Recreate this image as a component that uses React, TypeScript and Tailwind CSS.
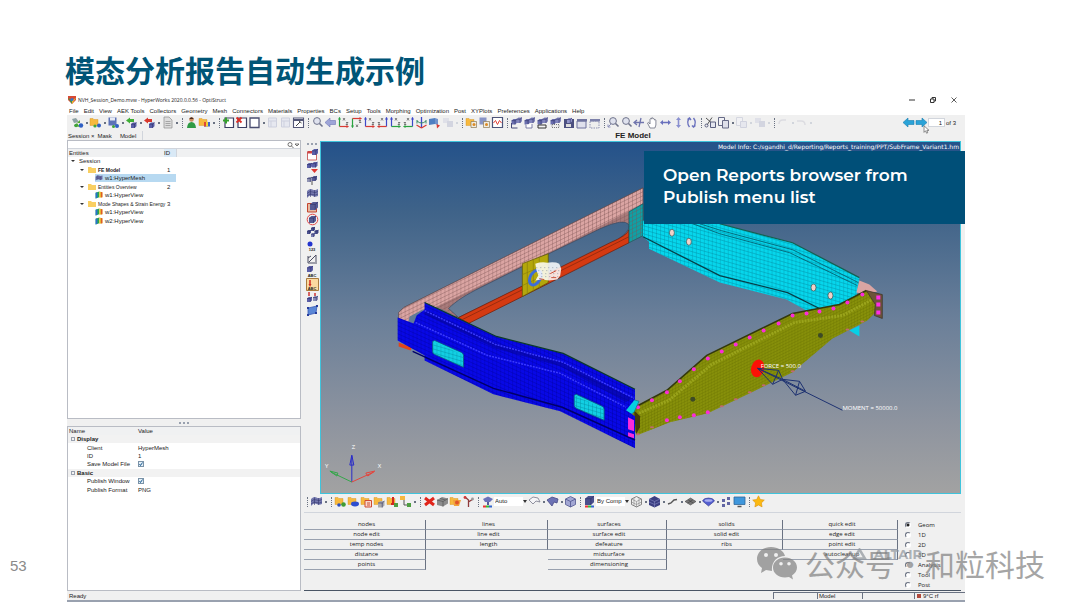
import { ReactNode, useState } from "react";

/* ---------- toolbar glyphs, all drawn on a 13x13 box ---------- */

const cube = (x: number, y: number, s: number, fill = "#5b5fa8") => (
  <g>
    <path d={ `M${x} ${y + s * 0.3}L${x + s * 0.35} ${y}H${x + s}V${y + s * 0.7}L${x + s * 0.65} ${y + s}H${x}Z` } fill={ fill } />
    <path d={ `M${x} ${y + s * 0.3}H${x + s * 0.65}L${x + s} ${y}M${x + s * 0.65} ${y + s * 0.3}V${y + s}` } stroke="#2c2f66" strokeWidth=".6" fill="none" />
  </g>
);

const folder = <path d="M1 2.500h3l1 1h4v6H1z" fill="#f7b93e" stroke="#d18f1c" strokeWidth=".4" />;
const mesh = (
  <>
    <path d="M1 4q3-3 5.500-1.500T12 2v7q-3 1.500-5.500 0T1 11z" fill="#7478ae" />
    <path d="M1 6.500q3-3 5.500-1.500T12 4.500M1 9q3-3 5.500-1.500T12 7M4.500 2.500v7.500M8.500 3v7" stroke="#34386f" strokeWidth=".6" fill="none" />
  </>
);
const magnifier = (
  <>
    <circle cx="6" cy="5" r="3.400" fill="#dfe2ee" stroke="#70748c" />
    <path d="M8.500 7.500l3 3" stroke="#70748c" strokeWidth="1.600" />
  </>
);
const stackedCubes = (
  <>
    { cube(1.5, 3, 5.5, "#6a6eae") }
    { cube(6.5, 1.5, 5.5, "#8285bd") }
  </>
);

function axes(v: string, h: string, flip = false) {
  return (
    <g transform={ flip ? "translate(13 0) scale(-1 1)" : undefined }>
      <path d="M2.500 1.500v9" stroke={ v } strokeWidth="1.200" />
      <path d="M1 3.500l1.500-2.500L4 3.500z" fill={ v } />
      <path d="M2.500 10.500h8" stroke={ h } strokeWidth="1.200" />
      <path d="M9.500 9l2.500 1.500L9.500 12z" fill={ h } />
      <path d="M6 2l2 2.500M8 2L6 4.500M9 6.500h2l-2 2h2" stroke="#333" strokeWidth=".6" fill="none" />
    </g>
  );
}

const glyphs: Record<string, ReactNode> = {
  newSession: <><path d="M1 3l4-1 3 4-5 1z" fill="#8ea3a5" /><path d="M6 7h3V4M3 10l3-3 3 4z" fill="#56a92f" /><circle cx="10" cy="9.500" r="2.200" fill="#2f5fc4" /><circle cx="5" cy="9.500" r="1.800" fill="#3fa33a" /></>,
  openSession: <>{ folder }<circle cx="10" cy="9.500" r="2" fill="#2f5fc4" /><circle cx="6" cy="10" r="1.600" fill="#3fa33a" /></>,
  save: <><path d="M1.500 1.500h8v8h-8z" fill="#5b72b8" /><path d="M3 1.500h5v3H3z" fill="#e6eaf5" /><circle cx="10" cy="10" r="2" fill="#2f5fc4" /><circle cx="6.500" cy="10.500" r="1.500" fill="#3fa33a" /></>,
  importModel: <><path d="M1 4.500L5 1.500V3h4v3H5v1.500z" fill="#3fae35" />{ cube(6, 6.5, 5.5) }</>,
  exportModel: <><path d="M1 4.500L5 1.500V3h4v3H5v1.500z" fill="#d8372c" />{ cube(6, 6.5, 5.5) }</>,
  doc: <><path d="M3 1h5l3 3v8H3z" fill="#ddd" stroke="#8e8e8e" strokeWidth=".7" /><path d="M4.500 5.500h5M4.500 7.500h5M4.500 9.500h5" stroke="#8e8e8e" strokeWidth=".7" /></>,
  user: <><circle cx="6.500" cy="3.500" r="2.300" fill="#c98d5e" /><path d="M4.200 3q2.300-3.500 4.600 0z" fill="#4a2b1b" /><path d="M2 12q.5-6 4.500-6t4.500 6z" fill="#2f9a44" /></>,
  palette: <>{ folder }<path d="M6 6h6v4.500H6z" fill="#3c66c7" /><path d="M6 6h2v4.500H6z" fill="#e04638" /><path d="M8 6h2v4.500H8z" fill="#f2d334" /></>,
  pageAdd: <><path d="M3 2h8.500v9.500H3z" fill="#fff" stroke="#3c3f63" strokeWidth="1.200" /><path d="M1 3.500h2v-2h2v2h2v2H5v2H3v-2H1z" fill="#35a02d" /></>,
  pageDel: <><path d="M3 2h8.500v9.500H3z" fill="#fff" stroke="#3c3f63" strokeWidth="1.200" /><path d="M1.500 1.500l5 5M6.500 1.500l-5 5" stroke="#da2d24" strokeWidth="1.800" /></>,
  page: <path d="M2 2h9v9.500H2z" fill="#fff" stroke="#4a4d70" strokeWidth="1.300" />,
  faded: <path d="M2.500 2h8v9h-8zM2.500 5h8M5 5v6" fill="#e6e8f0" stroke="#cdd0de" />,
  pageTools: <><path d="M1.500 2h10v9.500h-10z" fill="#fff" stroke="#555878" strokeWidth="1.100" /><path d="M1.500 4h10" stroke="#555878" strokeWidth="2" /><path d="M4 10l4-4M7 5l2.500 2" stroke="#444" /></>,
  magnifier,
  back: <path d="M1 6.500L6 2v2.500h5.500v4H6V11z" fill="#9ea5d8" stroke="#6e75b5" strokeWidth=".6" />,
  axisA: axes("#2aa341", "#d83b34"),
  axisB: <g transform="translate(0 13) scale(1 -1)">{ axes("#2aa341", "#d83b34") }</g>,
  axisC: axes("#3d48c9", "#d83b34"),
  axisD: axes("#3d48c9", "#d83b34", true),
  axisE: axes("#3d48c9", "#2aa341"),
  axisF: axes("#3d48c9", "#2aa341", true),
  rotate: <><path d="M6.500 1v11" stroke="#3d48c9" strokeWidth="1.300" /><path d="M6.500 12L1.500 9M6.500 12l5-3" stroke="#d83b34" strokeWidth="1.200" /><path d="M2 5q4.500 4 9 0M2 7.500V4M11 7.500V4" stroke="#3a8b67" fill="none" /></>,
  views: <><path d="M1 3l6-1v6l-6 1z" fill="#4f7fc2" /><path d="M7 2l3 1v6L7 8z" fill="#7193cd" /><path d="M8.500 8l3.500 1.500-3 3z" fill="#d83b34" /></>,
  folderView: <>{ folder }<path d="M6 5.500h5.500v6H6z" fill="#f0ede3" stroke="#8d7a55" strokeWidth=".7" /><circle cx="9" cy="8.500" r="1.500" fill="#db8b27" /></>,
  saveView: <><path d="M1.500 1.500h7v7h-7z" fill="#8894c6" /><path d="M5.500 5.500h6v6h-6z" fill="#f0ede3" stroke="#8d7a55" strokeWidth=".7" /><circle cx="8.500" cy="8.500" r="1.500" fill="#db8b27" /></>,
  plot: <><path d="M1.500 1.500h10v10h-10z" fill="#fff" stroke="#4c5479" strokeWidth="1.200" /><path d="M2.500 7l2-2.500 2 4 2-4 2 2.500" fill="none" stroke="#e0433a" /></>,
  winA: <>{ stackedCubes }<path d="M1.500 7v5h6" fill="none" stroke="#444878" /></>,
  winB: <>{ stackedCubes }<path d="M3 8.500v3.500h6v-4" fill="#fff" stroke="#6f739e" strokeWidth=".9" /></>,
  winC: <>{ stackedCubes }<path d="M2 9h8v3H2z" fill="#f3f3f3" stroke="#333" /></>,
  winD: <>{ stackedCubes }<path d="M3 8.500h7v3H3z" fill="#eee" stroke="#777" strokeDasharray="1 1" /></>,
  winE: <><path d="M2 3h10v9H2z" fill="#4c5080" />{ cube(5, 2, 5, "#9396ca") }<path d="M4 8h5v3H4z" fill="#ddd" /></>,
  winF: <><path d="M2 5h9v7H2z" fill="#dfe0ec" stroke="#6f739e" /><path d="M2 3h10v2.500H2z" fill="#6f739e" /></>,
  winG: <><path d="M2 5h9v7H2z" fill="#eee" stroke="#8c90b2" strokeDasharray="1.500 1" /><path d="M2 3h10v2.500H2z" fill="#7d81aa" /></>,
  zoomFit: <>{ magnifier }<path d="M1 11l3-3M1 8.500V11h2.500" stroke="#8d91ba" fill="none" /></>,
  pan: <path d="M1 6.500h10M4 4L1 6.500 4 9M8 2L6 11" stroke="#7075ad" strokeWidth="1.300" fill="none" />,
  hand: <path d="M4 12L1.500 7l1-.7L4 8V3q.8-1 1.400 0V2q.8-1 1.500 0v1q.8-1 1.500 0v1q.9-.8 1.500 0v5l-1 3z" fill="#fff" stroke="#6b6e80" strokeWidth=".8" />,
  arrowsH: <path d="M1 6.500L4 4v1.800h5V4l3 2.500L9 9V7.200H4V9z" fill="#6970bd" />,
  arrowsV: <path d="M6.500 1L9 4H7.300v5H9l-2.500 3L4 9h1.700V4H4z" fill="#8a90d0" />,
  spin: <path d="M4.500 2Q1 6.500 4.500 11M8.500 2q3.500 4.500 0 9M6 4L4.500 2 2.500 3.500M7 9.500L8.500 11l2-1.500" stroke="#6970bd" strokeWidth="1.400" fill="none" />,
  cut: <><path d="M2 2l7 6M8 1.500L3 9" stroke="#555" /><path d="M6.500 6h5v5.500h-5z" fill="#e4e6ef" stroke="#5c6080" /><circle cx="2.500" cy="9.500" r="1.500" fill="none" stroke="#5c6080" /></>,
  copy: <><path d="M1.500 1.500h6v8h-6z" fill="#f2f2f6" stroke="#666a86" /><path d="M5.500 4.500h6v7.500h-6z" fill="#dfe0ea" stroke="#666a86" /></>,
  copyOff: <><path d="M1.500 1.500h6v8h-6z" fill="#f1f1f4" stroke="#d5d7e0" /><path d="M5.500 5.500h6v6h-6z" fill="#e6e7ee" stroke="#d0d2de" /></>,
  cubesOff: <><path d="M2 2h6v5H2z" fill="#dfe0e8" /><path d="M6 5h6v6H6z" fill="#d3d5e0" /></>,
  undoOff: <path d="M2 8q0-4 4-4h3" stroke="#dcdce1" strokeWidth="1.500" fill="none" />,
  redoOff: <path d="M2 5h4q4 0 4 4" stroke="#dcdce1" strokeWidth="1.500" fill="none" />,
  mesh,
  compAsm: <>{ folder }<circle cx="9.500" cy="9.500" r="2.300" fill="#3f9b34" /><circle cx="5" cy="10" r="1.800" fill="#2c4fc0" /></>,
  compBlue: <>{ folder }<ellipse cx="8" cy="9" rx="4" ry="2.400" fill="#2f4fd0" /></>,
  compRed: <>{ folder }<path d="M5 5.500h6.500V12H5z" fill="#f7d9cd" stroke="#cf4a32" /><path d="M7 8h3M7 10h3" stroke="#cf4a32" /></>,
  compGray: <>{ folder }{ cube(5, 6, 6.5, "#aaa") }</>,
  compPin: <>{ folder }<path d="M7 2v7M5 9h4" stroke="#d4261e" strokeWidth="2" /><path d="M8 8h4v4H8z" fill="#4e9e41" /></>,
  compTree: <><path d="M1 1h5v4H1z" fill="#f7b93e" /><path d="M5 5v5h3" stroke="#555" fill="none" /><path d="M8 8h4v4H8z" fill="#4e9e41" /></>,
  cross: <path d="M2 3l9 7M11 3l-9 7" stroke="#e1251b" strokeWidth="3" />,
  grayBox: <><path d="M1 5l5-3 6 1.500v5L7 11.500 1 10z" fill="#8c8c8c" /><path d="M1 5l6 1.500 5-3M7 6.500v5M4 3.500L9.500 5" stroke="#555" strokeWidth=".7" fill="none" /></>,
  orange: <>{ folder }<path d="M4 5h8l-2 6H5z" fill="#f2a13a" /><circle cx="8" cy="7.500" r="2" fill="#e0532a" /></>,
  branch: <><path d="M6.500 12V5L3 2M6.500 7L11 4" stroke="#8f3a3a" strokeWidth="1.300" fill="none" /><circle cx="3" cy="2.500" r="1.400" fill="#cf3838" /><circle cx="10.500" cy="4" r="1.400" fill="#999" /></>,
  brush: <><path d="M2 4l5-2.500L12 4 9 7H4z" fill="#6b72bb" /><path d="M6 7h2v3H6z" fill="#555a99" /><path d="M2 10.500h3v2H2z" fill="#e33" /><path d="M5 10.500h3v2H5z" fill="#3b3" /><path d="M8 10.500h3v2H8z" fill="#36c" /></>,
  colorCube: <>{ cube(2, 1, 9, "#4a4f8c") }<path d="M2 10.500h3v2H2z" fill="#e33" /><path d="M5 10.500h3v2H5z" fill="#3b3" /><path d="M8 10.500h3v2H8z" fill="#36c" /></>,
  wireSurf: <path d="M1 5l4-3 5 1 2 4-4-1-3 3z" fill="#f5f5f7" stroke="#77798a" strokeWidth=".8" />,
  solidSurf: <path d="M1 5l5-3 6 2-1 4-3-1-2 4z" fill="#6d72b4" stroke="#454987" strokeWidth=".8" />,
  bigCube: <><path d="M1.500 4L6.500 1.500l5 2.500v5.500l-5 2.500-5-2.500z" fill="#a3a7d3" stroke="#50558f" strokeWidth=".8" /><path d="M1.500 4l5 2.500 5-2.500M6.500 6.500V12" stroke="#50558f" strokeWidth=".8" fill="none" /></>,
  wireCube: <><path d="M1.500 4L6.500 1.500l5 2.500v5.500l-5 2.500-5-2.500z" fill="#eee" stroke="#777" strokeWidth=".9" /><path d="M1.500 4l5 2.500 5-2.500M6.500 6.500V12M4 3v7.500M9 3v7.500M1.500 7l5 2.500 5-2.500" stroke="#888" strokeWidth=".6" /></>,
  darkCube: <><path d="M1 4l5.500-3L12 4v6l-5.500 2.500L1 10z" fill="#3b3f82" /><path d="M1 4l5.500 2.500L12 4M6.500 6.500v6M1 7l5.500 2.500L12 7" stroke="#888cc5" strokeWidth=".6" fill="none" /></>,
  line: <path d="M2 9l3-1 3-3 3-.5" stroke="#555" strokeWidth="1.400" fill="none" />,
  grayDiamond: <><path d="M1 6.500L6.500 3 12 6.500 6.500 10z" fill="#777" stroke="#333" strokeWidth=".5" /><path d="M4 4.700l5.500 3.500M9 4.700L3.500 8.200" stroke="#333" strokeWidth=".5" /></>,
  blueDiamond: <><path d="M.5 6q1-3 6-3t6 3l-6 5z" fill="#555fd0" stroke="#2e348c" strokeWidth=".6" /><ellipse cx="6.500" cy="5.500" rx="4" ry="1.300" fill="#a9aff0" /></>,
  dots: <path d="M2 4h3v3H2zM7 2h3v3H7zM2 9h3v3H2zM7 7h3v3H7z" fill="#6165a3" />,
  monitor: <><path d="M1 2h11v7.500H1z" fill="#3f97dc" stroke="#30689b" strokeWidth=".8" /><path d="M4.500 11.500h4" stroke="#555" strokeWidth="1.500" /></>,
  star: <path d="M6.500 .8l1.800 3.700 4 .6-2.900 2.800.7 4-3.600-1.900-3.600 1.900.7-4L.7 5.100l4-.6z" fill="#fbb912" stroke="#dd9208" strokeWidth=".6" />,
  colorFlag: <><path d="M1 3l6-2v9l-6 2z" fill="#28a649" /><path d="M7 1l5 1v8l-5 1z" fill="#e8c52c" /><path d="M1 3l3-1v9l-3 1z" fill="#2970d2" /><path d="M9.500 1.500L12 2v8l-2.500 .5z" fill="#df5a2a" /></>,
  sideCal: <><path d="M1.500 4h9v8h-9z" fill="#fff" stroke="#c66" /><path d="M1.500 3h7v2.500h-7z" fill="#c44" />{ cube(6, 1, 6) }</>,
  sideRed: <>{ cube(1, 2, 5) }{ cube(6, 1, 5.5) }<path d="M5 8h7l-3.500 4z" fill="#df3630" /></>,
  sideTwo: <>{ cube(1, 3, 5, "#9295b4") }{ cube(6, 2, 5, "#555a93") }<path d="M6 7v4" stroke="#555" /></>,
  sideBox: <><path d="M1.500 3.500h9V12h-9z" fill="#e5b9a1" stroke="#c4452f" />{ cube(4, 2, 8, "#555a93") }</>,
  sideRing: <>{ cube(3, 3, 7, "#555a93") }<circle cx="6.500" cy="6.500" r="5.300" fill="none" stroke="#e34747" /></>,
  sideArc: <>{ cube(1, 4, 4, "#4b508f") }{ cube(5, 1, 4, "#4b508f") }{ cube(8.500, 4, 4, "#4b508f") }{ cube(5, 7, 4, "#777bb0") }</>,
  sideNode: <circle cx="4" cy="5" r="2.500" fill="#2334cf" />,
  sideVec: <path d="M2 11V4M2 11h9M3 10l7-7M2 6l3-2M10 3v7" stroke="#4a4d63" strokeWidth="1" fill="none" />,
  sideAbc: <>{ cube(1, 1, 6) }</>,
  sideHot: <><path d="M.5.5h12v12H.5z" fill="#fbd9a0" stroke="#a97b3d" /><path d="M4 2v5" stroke="#d02a20" strokeWidth="1.500" /><path d="M2.500 6h3L4 9z" fill="#d02a20" /></>,
  sideMix: <><path d="M3 1v4M9 2v3" stroke="#c33" strokeWidth="1.500" />{ cube(1, 6, 5) }{ cube(7, 5, 5, "#8a8db8") }</>,
  sidePlane: <><path d="M2 4l9-2-1 7-8 2z" fill="#5a86d6" stroke="#3a5bb5" strokeWidth=".8" /><path d="M1 3h2v2H1zM10 1h2v2h-2zM9 8h2v2H9zM1 10h2v2H1z" fill="#263c9c" /></>,
};

function Glyph({ name }: { name: string }) {
  return (
    <svg viewBox="0 0 13 13" fill="none" className="h-[13px] w-[13px] shrink-0" aria-hidden="true">
      { glyphs[name] }
    </svg>
  );
}

// "|" is a dotted handle, a trailing "+" adds the drop-down mark
function Tools({ items }: { items: string[] }) {
  return (
    <>
      { items.map((item, i) => {
        if (item === "|") {
          return (
            <span key={ i } className="flex w-[6px] shrink-0 justify-center">
              <span className="h-[10px] border-l border-dotted border-gray-500" />
            </span>
          );
        }
        const name = item.replace("+", "");
        return (
          <button key={ i } type="button" aria-label={ name } className="flex shrink-0 items-center">
            <Glyph name={ name } />
            { item.endsWith("+") && (
              <span className="flex w-[5px] justify-center">
                <span className={ `h-[2px] w-[2px] ${name.endsWith("Off") ? "bg-gray-300" : "bg-gray-500"}` } />
              </span>
            ) }
          </button>
        );
      }) }
    </>
  );
}

const menus = [
  "File", "Edit", "View", "AEK Tools", "Collectors", "Geometry", "Mesh", "Connectors", "Materials", "Properties",
  "BCs", "Setup", "Tools", "Morphing", "Optimization", "Post", "XYPlots", "Preferences", "Applications", "Help",
];

const topTools = [
  "newSession+", "openSession+", "save+", "importModel+", "exportModel+", "doc+", "|", "user", "palette+", "|",
  "pageAdd", "pageDel", "page+", "faded", "faded", "pageTools", "|", "magnifier", "back", "axisA", "axisB", "axisC",
  "axisD", "axisE", "axisF", "rotate", "views", "cubesOff+", "|", "folderView", "saveView", "plot", "|", "winA", "winB",
  "winC", "winD", "winE", "winF", "winG", "|", "zoomFit", "magnifier", "pan", "hand", "arrowsH", "arrowsV", "spin", "|",
  "cut", "copy+", "copyOff+", "cubesOff+", "|", "undoOff+", "redoOff+",
];

const sideTools = [
  "sideCal", "sideRed", "sideTwo", "mesh", "sideBox", "sideRing", "sideArc", "sideNode", "sideVec", "sideAbc",
  "sideHot", "sideMix", "sidePlane",
];
const sideText: Record<string, string> = { sideNode: "123", sideAbc: "ABC", sideHot: "ABC" };

type Node = { label: string; id?: string; kind: "root" | "folder" | "mesh" | "view"; bold?: boolean; selected?: boolean };

const tree: Node[] = [
  { label: "Session", kind: "root" },
  { label: "FE Model", id: "1", kind: "folder", bold: true },
  { label: "w1:HyperMesh", kind: "mesh", selected: true },
  { label: "Entities Overview", id: "2", kind: "folder" },
  { label: "w1:HyperView", kind: "view" },
  { label: "Mode Shapes & Strain Energy", id: "3", kind: "folder" },
  { label: "w1:HyperView", kind: "view" },
  { label: "w2:HyperView", kind: "view" },
];

const panelColumns = [
  ["nodes", "node edit", "temp nodes", "distance", "points"],
  ["lines", "line edit", "length"],
  ["surfaces", "surface edit", "defeature", "midsurface", "dimensioning"],
  ["solids", "solid edit", "ribs"],
  ["quick edit", "edge edit", "point edit", "autocleanup"],
];

const pages = ["Geom", "1D", "2D", "3D", "Analysis", "Tool", "Post"];

/* ---------- model ---------- */

const magenta = [
  [638, 407], [652, 400], [667, 392], [680, 381], [694, 369], [708, 358], [722, 351], [736, 344], [750, 337], [764, 330],
  [779, 323], [793, 315], [807, 313], [820, 311], [834, 308], [848, 302], [863, 294], [667, 420], [680, 417], [694, 415],
  [708, 412],
];
const edgeMarks = [[722, 406], [736, 399], [750, 392], [764, 385], [793, 371], [848, 329], [863, 321], [638, 434], [652, 427]];

function Model() {
  return (
    <svg
      viewBox="320 141 641 352"
      preserveAspectRatio="xMidYMid slice"
      className="absolute inset-0 h-full w-full"
      role="img"
      aria-label="Sub frame mesh"
    >
      <defs>
        <linearGradient id="sky" gradientUnits="userSpaceOnUse" x1="0" y1="141" x2="0" y2="493">
          <stop offset="0" stopColor="#24528a" />
          <stop offset="0.2" stopColor="#3f6389" />
          <stop offset="0.5" stopColor="#6a7f99" />
          <stop offset="0.8" stopColor="#8e949f" />
          <stop offset="1" stopColor="#a2a2a2" />
        </linearGradient>
        <pattern id="gridBlue" width="4" height="4" patternUnits="userSpaceOnUse" patternTransform="skewY(24)">
          <path d="M0 0H4M0 0V4" stroke="#000090" strokeWidth=".6" />
        </pattern>
        <pattern id="gridCyan" width="4" height="4" patternUnits="userSpaceOnUse" patternTransform="skewY(16)">
          <path d="M0 0H4M0 0V4" stroke="#028ba3" strokeWidth=".8" />
        </pattern>
        <pattern id="gridPink" width="4" height="4" patternUnits="userSpaceOnUse" patternTransform="skewY(-26)">
          <path d="M0 0H4M0 0V4" stroke="#7d5353" strokeWidth=".7" />
        </pattern>
        <pattern id="gridOlive" width="3" height="3" patternUnits="userSpaceOnUse" patternTransform="skewY(-26)">
          <path d="M0 0H3M0 0V3" stroke="#646d00" strokeWidth=".6" />
        </pattern>
      </defs>
      <rect x="320" y="141" width="641" height="352" fill="url(#sky)" />

      {/* rear cross member */}
      <path d="M403 307L643 187V235L629 242 548 282 468 323 442 309 424 303 413 323 398 318V312Z" fill="#a97b7b" />
      <path d="M403 307L643 187V203L560 246 430 309 415 317 407 325 398 318V312Z" fill="#dba5a3" />
      <path d="M403 307L643 187V225L442 323 398 322V312Z" fill="url(#gridPink)" stroke="#3d3034" strokeWidth=".6" />
      <path d="M448 308C456 300 466 294 480 287L522 266 600 228Q624 217 629 224 631 232 610 243L458 317Z" fill="url(#sky)" stroke="#3b4a60" strokeWidth=".7" />
      <path d="M407 324L409 316 424 308 416 317 412 324Z" fill="#617b98" />
      <path d="M458 317L610 242Q627 235 629 229V242L548 283 468 323Z" fill="#d43a12" stroke="#6d1c08" strokeWidth=".7" />
      <path d="M462 319L629 236" stroke="#82260d" strokeWidth=".7" />
      <path d="M398 342L411 347 410 350 398 346Z" fill="#e2451b" />
      <path d="M629 211L643 203V235L629 242Z" fill="#0fa0a5" />
      <path d="M629 211L643 203V235L629 242Z" fill="url(#gridPink)" stroke="#165b60" strokeWidth=".7" />
      <path d="M522 263L548 253V282L522 296Z" fill="#b3a70c" stroke="#5b5406" strokeWidth=".7" />
      <path d="M527 261V294M533 258V291M539 256V288M522 274L548 263M522 285L548 273" stroke="#857b0c" strokeWidth=".6" />
      <ellipse cx="535" cy="277" rx="5" ry="8" transform="rotate(30 535 277)" fill="none" stroke="#3d6cd9" strokeWidth="3" />
      <path d="M535 263q6-2 12-1 8-1 12 1l2 5-1 7-3 4-8 1-8-1-6 1 3-5-2-6z" fill="#fff" opacity=".85" />
      <g fill="none" stroke="#8c97a6" strokeWidth=".8">
        <path d="M536 267h23M538 270h22M537 273h22M541 276h17" strokeDasharray="1 3" />
      </g>
      <path d="M550 273l6-3M551 277h5M539 278l5 1" stroke="#c4442d" strokeWidth=".9" />

      {/* right rear rail */}
      <path d="M643 220L720 223 793 242 860 277 857 295 833 312 807 310 787 299 720 282 649 248V241L643 236Z" fill="#06d6ec" />
      <path d="M643 220L720 223 793 242 860 277 857 295 833 312 807 310 787 299 720 282 649 248V241L643 236Z" fill="url(#gridCyan)" />
      <path d="M643 236L720 275 788 292 820 308" fill="none" stroke="#053f49" strokeWidth="1.300" />
      <path d="M693 223L720 233 790 252 858 285M700 223L722 230 793 249 859 282" fill="none" stroke="#045664" strokeWidth=".8" />
      <path d="M720 223L793 242 860 277" fill="none" stroke="#155f50" strokeWidth="1.200" />
      { [[672, 232], [689, 241], [814, 287], [831, 295]].map(([x, y]) => (
        <ellipse key={ x } cx={ x } cy={ y } rx="2.500" ry="3.500" fill="#f1d1c8" stroke="#33565a" strokeWidth=".7" />
      )) }
      <path d="M857 292L860 280 870 284 878 291 867 294Z" fill="#dba5a3" />
      <path d="M850 330L860 325V336Z" fill="#06d0e6" />

      {/* front cross member */}
      <path d="M633 408L667 390 707 355 793 313 840 304 867 290 875 293 876 312 868 320 833 338 793 372 750 393 708 413 670 422 637 435 632 425Z" fill="#87900a" />
      <path d="M633 408L667 390 707 355 793 313 840 304 867 290 875 293 876 312 868 320 833 338 793 372 750 393 708 413 670 422 637 435 632 425Z" fill="url(#gridOlive)" />
      <path d="M639 413L669 400 712 364 795 322 843 315 873 299" fill="none" stroke="#a0aa20" strokeWidth="3" strokeDasharray="2 1" opacity=".8" />
      <path d="M633 408L667 390 707 355 793 313 840 304 867 290" fill="none" stroke="#34390c" strokeWidth="1.600" />
      <path d="M634 410L640 416V427L636 434Z" fill="#44390b" />
      <path d="M867 290L883 294V318L875 315 876 304Z" fill="#6d5339" stroke="#3b2f24" strokeWidth=".7" />
      <path d="M877 295h4v4h-4zM877 302h4v4h-4zM877 310h4v4h-4z" fill="#ff2ee6" />
      { magenta.map(([x, y]) => (
        <circle key={ `${x}-${y}` } cx={ x } cy={ y } r="2" fill="#fb2bd9" />
      )) }
      { edgeMarks.map(([x, y]) => (
        <ellipse key={ `${x}-${y}` } cx={ x } cy={ y } rx="2" ry="1" fill="#c06a70" />
      )) }
      <circle cx="821" cy="335" r="2.500" fill="#3d4a25" />
      <circle cx="693" cy="399" r="2.500" fill="#3d4a25" />

      {/* left front rail */}
      <path d="M622 408L632 399 639 401 634 412 628 416Z" fill="#06cfe0" stroke="#057180" strokeWidth=".6" />
      <path d="M424 302L496 336 563 353 635 389V399L626 410 635 416V448L560 411 493 394 424 360V355L397 340V317L413 323 416 315 424 309Z" fill="#0808e6" />
      <path d="M424 302L496 336 563 353 635 389V399L626 410 635 416V448L560 411 493 394 424 360V355L397 340V317L413 323 416 315 424 309Z" fill="url(#gridBlue)" />
      <path d="M424 314L495 348 560 366 626 402 632 398 563 362 496 343 424 309Z" fill="#05058f" opacity=".5" />
      <path d="M424 310L495 344 563 362 634 398M415 322L487 355 560 373 626 407" fill="none" stroke="#3a3aff" strokeWidth="1.500" strokeDasharray="2 1" />
      <path d="M412 351L493 388 562 407 635 440" fill="none" stroke="#000068" strokeWidth="1.400" />
      <path d="M424 302L496 336 563 353 635 389" fill="none" stroke="#0b3a2c" strokeWidth="1.200" />
      <path d="M434 340L461 352Q463 353 463 355V367L434 354Q432 353 432 351V341Z" fill="#12cfe3" stroke="#075a7c" strokeWidth=".8" />
      <path d="M576 394L602 406Q604 407 604 409V420L576 408Q574 407 574 405V395Z" fill="#12cfe3" stroke="#075a7c" strokeWidth=".8" />
      <path d="M433 341L463 355V367L432 353ZM575 395L604 409V420L574 407Z" fill="url(#gridCyan)" />
      <path d="M628 417l6 3v11l-6-2zM628 432l6 2v4l-6-2z" fill="#fb2bd9" />

      {/* loads */}
      <ellipse cx="758" cy="368" rx="6.500" ry="9" transform="rotate(15 758 368)" fill="#fb1206" />
      <g fill="none" stroke="#1d3170" strokeWidth="1">
        <path d="M758 368L843 410" />
        <path d="M758 368L779 370 773 384ZM779 370L783 379 773 384M758 368L783 379" />
        <path d="M783 379L800 381 796 395ZM800 381L806 391 796 395M783 379L806 391" />
      </g>
      <g fill="#fff" className="font-['Open_Sans',sans-serif] text-[6px]">
        <text x="761" y="368">FORCE = 500.0</text>
        <text x="843" y="410">MOMENT = 50000.0</text>
        <text x="351" y="449">Z</text>
        <text x="324" y="468">Y</text>
        <text x="377" y="468">X</text>
      </g>
      <g strokeWidth="1" fill="none">
        <path d="M351 482V456M351 455l-2 10h4z" stroke="#2a2dc8" />
        <path d="M351 482L330 472M329 471l8 2-1 3z" stroke="#35a64a" />
        <path d="M351 482L373 472M374 471l-9 2 2 3z" stroke="#e2453d" />
      </g>
    </svg>
  );
}

function Tree() {
  return (
    <ul className="grid h-[68px] grid-rows-8">
      { tree.map((node, i) => (
        <li
          key={ i }
          className={ `flex items-center ${node.kind === "root" ? "pl-[3px]" : node.kind === "folder" ? "pl-[12px]" : "pl-[27px]"}` }
        >
          { (node.kind === "root" || node.kind === "folder") && (
            <svg viewBox="0 0 8 6" className="h-[6px] w-[8px] shrink-0">
              <path d="M0 2h4L2 4z" fill="#333" />
            </svg>
          ) }
          { node.kind === "folder" && (
            <svg viewBox="0 0 8 7" className="mr-[2px] h-[7px] w-[8px] shrink-0">
              <path d="M0 1h3l1 1h4v5H0z" fill="#f9cf62" />
            </svg>
          ) }
          <span className={ `flex h-[8px] items-center gap-[2px] whitespace-nowrap ${node.selected ? "w-[81px] bg-[#b7d9f1]" : node.kind === "folder" ? "w-[69px] text-[5px]" : ""} ${node.bold ? "font-bold" : ""}` }>
            { node.kind === "mesh" && <span className="flex h-[8px] w-[8px]"><svg viewBox="0 0 13 13" fill="none">{ mesh }</svg></span> }
            { node.kind === "view" && <span className="flex h-[8px] w-[8px]"><svg viewBox="0 0 13 13">{ glyphs.colorFlag }</svg></span> }
            { node.label }
          </span>
          { node.id && <span>{ node.id }</span> }
        </li>
      )) }
    </ul>
  );
}

function Property({ name, children }: { name: string; children: ReactNode }) {
  return (
    <tr>
      <td className="p-0 pl-[19px]">{ name }</td>
      <td className="p-0">{ children }</td>
    </tr>
  );
}

function Group({ name }: { name: string }) {
  return (
    <tr className="bg-[#f2f2f2]">
      <th colSpan={ 2 } className="p-0 pl-[3px] text-left">
        <span className="flex items-center gap-[2px]">
          <span className="flex h-[4px] w-[4px] items-center border border-gray-400" />
          { name }
        </span>
      </th>
    </tr>
  );
}

function Check({ label }: { label: string }) {
  const [on, setOn] = useState(true);
  return (
    <label className="relative flex h-[6px] w-[6px]">
      <input
        type="checkbox"
        aria-label={ label }
        checked={ on }
        onChange={ () => setOn(!on) }
        className="h-[6px] w-[6px] appearance-none border border-[#7b93a8] bg-[#e3eef6]"
      />
      { on && (
        <svg viewBox="0 0 6 6" className="pointer-events-none absolute inset-0">
          <path d="M1.500 3l1 1.500 2-3" fill="none" stroke="#1f5f94" />
        </svg>
      ) }
    </label>
  );
}

function Browser() {
  return (
    <section className="flex w-[234px] shrink-0 flex-col">
      <div className="flex h-[9px] items-center">
        <button type="button" className="h-full px-[1px]">Session ×</button>
        <button type="button" className="h-full px-[2px]">Mask</button>
        <button type="button" className="h-full border-r border-gray-300 px-[6px]">Model</button>
      </div>
      <div className="flex flex-1 flex-col border border-[#b9bcc4] bg-white">
        <div className="flex h-[8px] items-center border-b border-gray-300 pr-[1px]">
          <input type="text" aria-label="Search entities" className="h-[7px] min-w-0 flex-1 outline-none" />
          <svg viewBox="0 0 12 8" fill="none" className="h-[8px] w-[12px]">
            <circle cx="3" cy="3.500" r="2" stroke="#555" strokeWidth=".8" />
            <path d="M4.500 5l2 2M8 3h4l-2 2z" stroke="#555" strokeWidth=".8" />
          </svg>
        </div>
        <div className="flex h-[8px] items-center bg-[#f0f1f2]">
          <span className="w-[96px] pl-[1px]">Entities</span>
          <span className="h-full w-[12px] bg-[#d9e9f6] leading-[8px]">ID</span>
          <span className="h-full border-l border-gray-300" />
        </div>
        <Tree />
      </div>
      <div className="flex h-[7px] items-center justify-center text-gray-500">
        <span className="w-[10px] border-t-2 border-dotted border-gray-400" />
      </div>
      <div className="h-[165px] border border-[#b9bcc4] bg-white">
        <table className="h-[67px] w-full table-fixed border-collapse">
          <thead>
            <tr className="bg-[#f0f1f2]">
              <th className="w-[70px] p-0 pl-[1px] text-left font-normal">Name</th>
              <th className="p-0 text-left font-normal">Value</th>
            </tr>
          </thead>
          <tbody>
            <Group name="Display" />
            <Property name="Client">HyperMesh</Property>
            <Property name="ID">1</Property>
            <Property name="Save Model File"><Check label="Save Model File" /></Property>
            <Group name="Basic" />
            <Property name="Publish Window"><Check label="Publish Window" /></Property>
            <Property name="Publish Format">PNG</Property>
          </tbody>
        </table>
      </div>
    </section>
  );
}

function Picker({ label, options, icon }: { label: string; options: string[]; icon: string }) {
  return (
    <span className="flex items-center">
      <Glyph name={ icon } />
      <select aria-label={ label } className="h-[9px] w-[29px] appearance-none bg-white pl-[1px] text-[6px] leading-[9px] outline-none">
        { options.map((o) => <option key={ o }>{ o }</option>) }
      </select>
      <svg viewBox="0 0 5 5" className="h-[5px] w-[5px]"><path d="M0 1h4L2 4z" fill="#333" /></svg>
    </span>
  );
}

function CommandPanel() {
  const [page, setPage] = useState("Geom");
  return (
    <div className="mr-[4px] ml-[3px] flex h-[79px] border-t border-b border-t-gray-300 border-b-gray-600 pt-[7px]">
      <div className="grid flex-1 grid-cols-[122fr_122fr_119fr_116fr_115fr] items-start">
        { panelColumns.map((column, i) => (
          <div key={ i } className="flex flex-col">
            { column.map((name) => (
              <button
                key={ name }
                type="button"
                className="h-[10px] border-r border-b border-r-gray-500 border-b-gray-400 pl-[4px] font-['Open_Sans',sans-serif] text-[6px] leading-[9px]"
              >
                { name }
              </button>
            )) }
          </div>
        )) }
      </div>
      <div className="flex w-[63px] flex-col pl-[7px]">
        { pages.map((p) => (
          <label key={ p } className="flex h-[10px] items-center gap-[7px] font-['Open_Sans',sans-serif] text-[6px] leading-[9px]">
            <input
              type="radio"
              name="page"
              checked={ page === p }
              onChange={ () => setPage(p) }
              className="h-[6px] w-[6px] appearance-none rounded-full border border-t-gray-500 border-r-white border-b-white border-l-gray-500 bg-white checked:bg-[radial-gradient(#222_1px,#fff_2px)]"
            />
            { p }
          </label>
        )) }
      </div>
    </div>
  );
}

function Workspace() {
  return (
    <section className="flex min-w-0 flex-1 flex-col">
      <h2 className="h-[10px] text-center text-[8px] leading-[10px] font-bold">FE Model</h2>
      <div className="flex flex-1">
        <div className="flex w-[19px] shrink-0 flex-col items-center pl-[3px]">
          <span className="mt-[2px] mb-[3px] w-[10px] border-t-2 border-dotted border-gray-400" />
          { sideTools.map((name) => (
            <button key={ name } type="button" aria-label={ name } className="relative h-[13px] w-[13px]">
              <Glyph name={ name } />
              { sideText[name] && (
                <span className="absolute inset-x-0 bottom-0 text-center text-[4px] leading-[4px] font-bold">{ sideText[name] }</span>
              ) }
            </button>
          )) }
        </div>
        <div className="relative mr-[4px] flex-1 border border-[#3fc4dc]">
          <Model />
          <p className="absolute top-[1px] right-[1px] font-['DejaVu_Sans',sans-serif] text-[6px] leading-[8px] whitespace-nowrap text-white">
            Model Info: C:/sgandhi_d/Reporting/Reports_training/PPT/SubFrame_Variant1.hm
          </p>
          <div className="absolute top-[9px] -right-[5px] h-[73px] w-[321px] bg-[#004f78] pt-[13px] pl-[19px] font-['Montserrat','Noto_Sans',sans-serif] text-[17px] leading-[22px] font-semibold text-white">
            Open Reports browser from<br />Publish menu list
          </div>
        </div>
      </div>
      <div className="mb-[3px] flex h-[15px] items-center pl-[3px]">
        <Tools items={ ["|", "mesh+", "|", "compAsm", "compBlue", "compRed", "compGray", "compPin", "compTree+", "|", "cross", "grayBox", "orange", "branch", "|"] } />
        <Picker label="Color mode" options={ ["Auto"] } icon="brush" />
        <Tools items={ ["wireSurf+", "solidSurf+", "bigCube", "|"] } />
        <Picker label="Color by" options={ ["By Comp"] } icon="colorCube" />
        <Tools items={ ["wireCube+", "darkCube+", "line+", "grayDiamond+", "blueDiamond+", "dots", "monitor", "|", "star"] } />
      </div>
      <CommandPanel />
    </section>
  );
}

function AppWindow() {
  return (
    <div className="relative flex min-w-0 flex-1 flex-col border-b-2 border-gray-400 bg-[#f0f0f0] font-['Liberation_Sans',sans-serif] text-[6px] leading-[8px] text-[#222]">
      <header className="bg-white">
        <div className="flex h-[12px] items-center gap-[2px] pl-px">
          <svg viewBox="0 0 8 8" className="h-[8px] w-[8px]">
            <path d="M0 0h8v4L4 8 0 4z" fill="#d74a35" />
            <path d="M0 2l4 6V4z" fill="#3b9b4a" />
            <path d="M8 2L4 8V4z" fill="#efb52e" />
            <circle cx="4" cy="3.500" r="1.600" fill="#3a72c9" />
          </svg>
          <span className="flex-1 font-['Open_Sans',sans-serif] text-[5px]">NVH_Session_Demo.mvw - HyperWorks 2020.0.0.56 - OptiStruct</span>
          <div className="flex gap-[15px] pr-[8px]">
            <button type="button" aria-label="Minimize"><svg viewBox="0 0 6 6" className="h-[6px] w-[6px]"><path d="M0 3h6" stroke="#333" /></svg></button>
            <button type="button" aria-label="Restore"><svg viewBox="0 0 6 6" className="h-[6px] w-[6px]"><path d="M.5 2h3.500v3.500H.5zM2 2V.5h3.500V4H4" fill="none" stroke="#333" /></svg></button>
            <button type="button" aria-label="Close"><svg viewBox="0 0 6 6" className="h-[6px] w-[6px]"><path d="M.5.5l5 5M5.500.5l-5 5" stroke="#333" strokeWidth=".8" /></svg></button>
          </div>
        </div>
        <nav className="flex h-[9px] items-center gap-[5px] pl-[2px]">
          { menus.map((m) => <button key={ m } type="button" className="whitespace-nowrap">{ m }</button>) }
        </nav>
      </header>
      <div className="flex h-[16px] items-center pb-px pl-[4px]">
        <Tools items={ topTools } />
        <div className="ml-auto flex items-center pr-[9px]">
          <button type="button" aria-label="Previous page">
            <svg viewBox="0 0 13 13" className="h-[13px] w-[13px]"><path d="M1 6.500L6 2v2.500h6v4H6V11z" fill="#2aa3d8" stroke="#1b7eae" strokeWidth=".6" /></svg>
          </button>
          <button type="button" aria-label="Next page" className="relative">
            <svg viewBox="0 0 13 13" className="h-[13px] w-[13px]"><path d="M12 6.500L7 2v2.500H1v4h6V11z" fill="#2aa3d8" stroke="#1b7eae" strokeWidth=".6" /></svg>
            <svg viewBox="0 0 8 11" className="absolute top-[9px] left-[8px] z-10 h-[9px] w-[7px]"><path d="M1 1v8l2-2 1 3 1.500-.5-1-3H7z" fill="#fff" stroke="#555" strokeWidth=".8" /></svg>
          </button>
          <input type="text" aria-label="Page" defaultValue="1" className="h-[9px] w-[17px] border border-gray-300 bg-white pr-[2px] text-right outline-none" />
          <span className="pl-px">of 3</span>
        </div>
      </div>
      <div className="flex flex-1">
        <Browser />
        <Workspace />
      </div>
      <footer className="flex h-[9px] items-center pl-[2px]">
        <span className="flex-1">Ready</span>
        <span className="h-[7px] w-[44px] border-t border-l border-gray-500" />
        <span className="h-[7px] w-[45px] border-t border-l border-gray-500 pl-[1px] leading-[6px]">Model</span>
        <span className="h-[7px] w-[52px] border-t border-l border-gray-500" />
        <span className="flex h-[7px] w-[51px] items-center gap-[2px] border-t border-l border-gray-500 pl-[2px] leading-[6px]">
          <span className="h-[4px] w-[4px] bg-[#b14a3c]" />9°C rf
        </span>
      </footer>
      <div className="absolute right-[43px] bottom-[40px] flex items-center gap-[7px] font-['Montserrat','Noto_Sans',sans-serif] text-[13px] leading-[12px] font-bold text-[#8f959c] opacity-70">
        <svg viewBox="0 0 15 12" className="h-[12px] w-[15px]"><path d="M7.500 1.500L13 10.500H2z" fill="none" stroke="currentColor" strokeWidth="2.500" /></svg>
        ALTAIR
      </div>
    </div>
  );
}

function Watermark() {
  return (
    <div className="absolute right-[35px] bottom-[25px] flex items-center font-['Noto_Sans_CJK_SC',sans-serif] text-[30px] leading-[40px] text-[#808080] opacity-70">
      <svg viewBox="0 0 40 33" className="mr-[8px] h-[33px] w-[40px]" fill="currentColor">
        <path fillRule="evenodd" d="M14 0C6 0 0 5 0 12c0 4 2 7 5 9l-1 5 5-3 6 1C14 15 20 9 28 9 27 4 21 0 14 0ZM9 6a2 2 0 1 1 0 4 2 2 0 0 1 0-4Zm10 0a2 2 0 1 1 0 4 2 2 0 0 1 0-4Z" />
        <path fillRule="evenodd" d="M28 10.500c-7 0-12 4.500-12 10s5 10 12 10l4-.5 4 2.500-1-4c3-2 5-5 5-8 0-5.500-5-10-12-10ZM24 15a1.800 1.800 0 1 1 0 3.600 1.800 1.800 0 0 1 0-3.600Zm8 0a1.800 1.800 0 1 1 0 3.600 1.800 1.800 0 0 1 0-3.600Z" />
      </svg>
      <span>公众号</span>
      <span className="w-[30px] text-center">·</span>
      <span>和粒科技</span>
    </div>
  );
}

export default function App() {
  return (
    <main className="relative flex min-h-screen flex-col overflow-hidden bg-white pt-[52px] pb-[6px]">
      <h1 className="mb-[8px] pl-[65px] font-['Noto_Sans_CJK_SC',sans-serif] text-[30px] leading-[34px] font-bold text-[#005577]">
        模态分析报告自动生成示例
      </h1>
      <div className="flex flex-1 pr-[115px]">
        <aside className="flex w-[67px] shrink-0 items-end pb-[26px] pl-[10px] font-['Liberation_Sans',sans-serif] text-[15px] leading-[20px] text-[#8a8a8a]">
          53
        </aside>
        <AppWindow />
      </div>
      <Watermark />
    </main>
  );
}
